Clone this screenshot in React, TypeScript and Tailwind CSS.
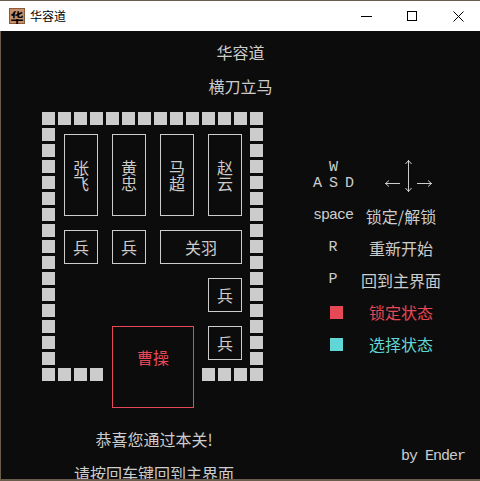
import React from "react";

const Sq = () => <div className="w-[13px] h-[13px] bg-[#cccccc]" />;

const Piece = ({ className, children }: { className: string; children: React.ReactNode }) => (
  <div className={"mt-[6px] ml-[6px] border flex items-center justify-center " + className}>{children}</div>
);

const Arrows = () => (
  <svg width="49" height="34" viewBox="0 0 49 34" fill="none" stroke="#cccccc" strokeWidth="1">
    <path d="M24.5 1V33M21.5 5L24.5 1.5L27.5 5M21.5 29L24.5 32.5L27.5 29" />
    <path d="M1 24.5H16M5 21.5L1.5 24.5L5 27.5" />
    <path d="M33 24.5H48M44 21.5L47.5 24.5L44 27.5" />
  </svg>
);

const App = () => {
  const wallSide = Array.from({ length: 15 });
  const wallTop = Array.from({ length: 14 });
  const wallBottom = Array.from({ length: 4 });

  return (
    <div className="w-[480px] h-[481px] flex flex-col overflow-hidden border-t border-b-2 border-[#6b5d4e] font-['Noto_Sans_CJK_SC',sans-serif]">
      {/* title bar */}
      <div className="h-[30px] shrink-0 flex items-center bg-white">
        <div className="ml-[9px] w-[16px] h-[16px] bg-[#c98f68] border border-[#8a5a3c] flex items-center justify-center text-[13px] leading-[13px] font-bold text-black">
          华
        </div>
        <span className="ml-[5px] text-[12px] leading-[14px] text-black">华容道</span>
        <div className="ml-auto mr-[-1px] flex h-full">
          <div className="w-[46px] flex items-center justify-center">
            <div className="w-[11px] h-px bg-black" />
          </div>
          <div className="w-[46px] flex items-center justify-center">
            <div className="w-[10px] h-[10px] border border-black" />
          </div>
          <div className="w-[46px] flex items-center justify-center">
            <svg width="11" height="11" viewBox="0 0 11 11" stroke="black" strokeWidth="1">
              <path d="M0.5 0.5L10.5 10.5M10.5 0.5L0.5 10.5" />
            </svg>
          </div>
        </div>
      </div>

      {/* console */}
      <div className="flex-1 bg-[#0c0c0c] border-l border-[#6b5d4e] text-[#cccccc] overflow-hidden flex flex-col">
        <div className="pt-[13px] text-center text-[16px] leading-[16px]">华容道</div>
        <div className="mt-[18px] text-center text-[16px] leading-[16px]">横刀立马</div>

        <div className="mt-[18px] pl-[41px] flex items-start">
          {/* board column */}
          <div className="w-[224px] flex flex-col">
            <div className="grid grid-cols-[repeat(14,16px)] grid-rows-[repeat(19,16px)] text-[16px] leading-[16px]">
              <div className="row-start-1 col-start-1 col-span-14 flex gap-[3px]">
                {wallTop.map((_, i) => <Sq key={i} />)}
              </div>
              <div className="row-start-2 row-span-15 col-start-1 flex flex-col gap-[3px]">
                {wallSide.map((_, i) => <Sq key={i} />)}
              </div>
              <div className="row-start-2 row-span-15 col-start-14 flex flex-col gap-[3px]">
                {wallSide.map((_, i) => <Sq key={i} />)}
              </div>
              <div className="row-start-17 col-start-1 col-span-4 flex gap-[3px]">
                {wallBottom.map((_, i) => <Sq key={i} />)}
              </div>
              <div className="row-start-17 col-start-11 col-span-4 flex gap-[3px]">
                {wallBottom.map((_, i) => <Sq key={i} />)}
              </div>

              <Piece className="col-start-2 col-span-3 row-start-2 row-span-6 w-[34px] h-[82px] flex-col border-[#cccccc]">
                <span>张</span><span>飞</span>
              </Piece>
              <Piece className="col-start-5 col-span-3 row-start-2 row-span-6 w-[34px] h-[82px] flex-col border-[#cccccc]">
                <span>黄</span><span>忠</span>
              </Piece>
              <Piece className="col-start-8 col-span-3 row-start-2 row-span-6 w-[34px] h-[82px] flex-col border-[#cccccc]">
                <span>马</span><span>超</span>
              </Piece>
              <Piece className="col-start-11 col-span-3 row-start-2 row-span-6 w-[34px] h-[82px] flex-col border-[#cccccc]">
                <span>赵</span><span>云</span>
              </Piece>
              <Piece className="col-start-2 col-span-3 row-start-8 row-span-3 w-[34px] h-[34px] border-[#cccccc]">兵</Piece>
              <Piece className="col-start-5 col-span-3 row-start-8 row-span-3 w-[34px] h-[34px] border-[#cccccc]">兵</Piece>
              <Piece className="col-start-8 col-span-6 row-start-8 row-span-3 w-[82px] h-[34px] border-[#cccccc]">关羽</Piece>
              <Piece className="col-start-11 col-span-3 row-start-11 row-span-3 w-[34px] h-[34px] border-[#cccccc]">兵</Piece>
              <Piece className="col-start-11 col-span-3 row-start-14 row-span-3 w-[34px] h-[34px] border-[#cccccc]">兵</Piece>
              <Piece className="col-start-5 col-span-6 row-start-14 row-span-6 w-[82px] h-[82px] !items-start pt-[22px] border-[#e74856] text-[#e74856]">
                曹操
              </Piece>
            </div>
            <div className="mt-[15px] text-center text-[16px] leading-[16px]">恭喜您通过本关!</div>
            <div className="mt-[18px] text-center text-[16px] leading-[16px]">请按回车键回到主界面</div>
          </div>

          {/* legend */}
          <div className="ml-[42px] flex-1 pt-[47px] flex flex-col text-[16px] leading-[16px]">
            <div className="h-[33px] flex items-start">
              <div className="w-[50px] pt-[1px] text-center font-['Liberation_Mono',monospace] text-[15px] tracking-[-1px]">
                <div>W</div>
                <div>A S D</div>
              </div>
              <div className="ml-[26px]">
                <Arrows />
              </div>
            </div>
            <div className="mt-[8px] h-[32px] flex items-center">
              <div className="w-[50px] text-center font-['Liberation_Mono',monospace] text-[15px] tracking-[-1px]">space</div>
              <div className="w-[86px] text-center">锁定/解锁</div>
            </div>
            <div className="h-[32px] flex items-center">
              <div className="w-[50px] text-center font-['Liberation_Mono',monospace] text-[15px]">R</div>
              <div className="w-[86px] text-center">重新开始</div>
            </div>
            <div className="h-[32px] flex items-center">
              <div className="w-[50px] text-center font-['Liberation_Mono',monospace] text-[15px]">P</div>
              <div className="w-[86px] text-center">回到主界面</div>
            </div>
            <div className="h-[32px] flex items-center">
              <div className="w-[50px] pl-[22px]">
                <div className="w-[13px] h-[13px] bg-[#e74856]" />
              </div>
              <div className="w-[86px] text-center text-[#e74856]">锁定状态</div>
            </div>
            <div className="h-[32px] flex items-center">
              <div className="w-[50px] pl-[22px]">
                <div className="w-[13px] h-[13px] bg-[#61d6d6]" />
              </div>
              <div className="w-[86px] text-center text-[#61d6d6]">选择状态</div>
            </div>
            <div className="mt-[89px] pl-[93px] font-['Liberation_Mono',monospace] text-[15px] tracking-[-1px] whitespace-nowrap">
              by Ender
            </div>
          </div>
        </div>
      </div>
    </div>
  );
};

export default App;
